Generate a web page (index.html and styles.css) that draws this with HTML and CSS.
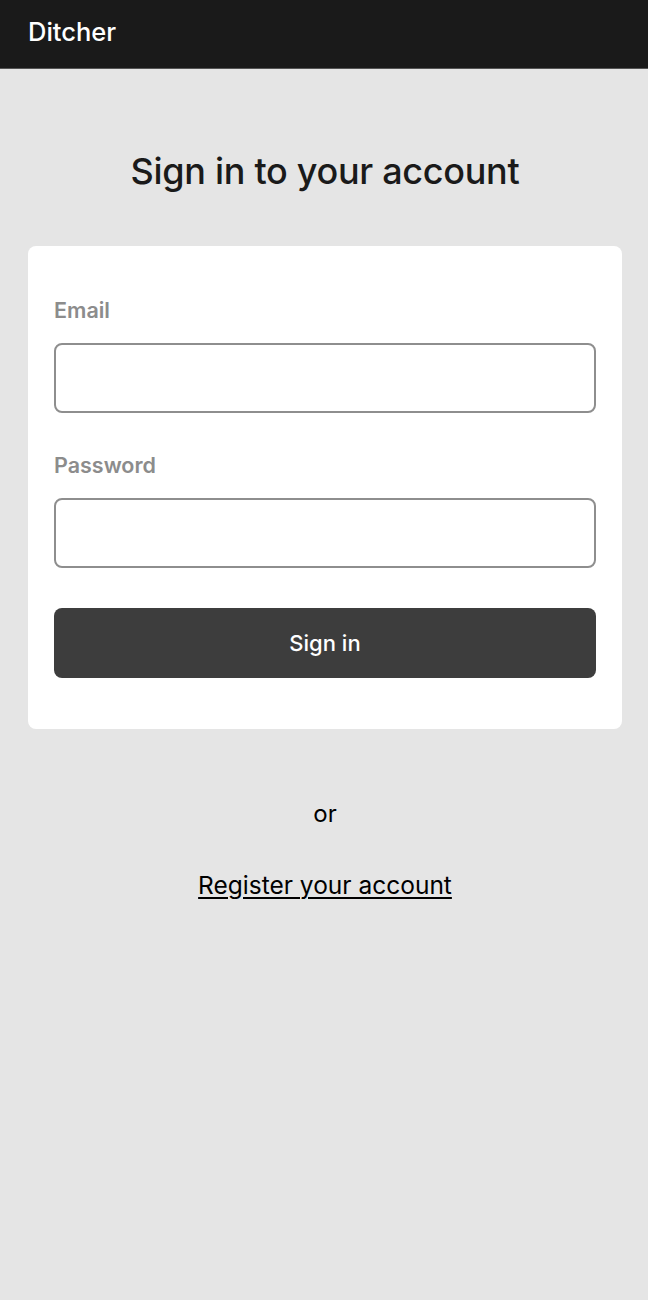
FILE: index.html
```html
<!DOCTYPE html>
<html lang="en">
<head>
<meta charset="utf-8">
<title>Ditcher - Sign in</title>
<link rel="stylesheet" href="styles.css">
</head>
<body>
<header class="topbar"><span class="brand">Ditcher</span></header>
<main class="main">
  <h1 class="title">Sign in to your account</h1>
  <form class="card">
    <label class="label" for="email">Email</label>
    <input class="input" id="email" type="email">
    <label class="label label-2" for="password">Password</label>
    <input class="input" id="password" type="password">
    <button class="btn" type="button">Sign in</button>
  </form>
  <p class="or">or</p>
  <a class="register" href="#">Register your account</a>
</main>
</body>
</html>
```
FILE: styles.css
```css
* { box-sizing: border-box; }
html, body { margin: 0; padding: 0; }
body {
  background: #e5e5e5;
  font-family: Inter, "Noto Sans", sans-serif;
  color: #1a1a1a;
  min-height: 1300px;
}
.topbar {
  height: 69px;
  background: #1a1a1a;
  border-bottom: 1px solid #555;
  display: flex;
  align-items: center;
  padding: 0 28px 6px;
}
.brand {
  color: #fff;
  font-size: 25.5px;
  font-weight: 500;
}
.main {
  padding: 0 26px 0 28px;
  display: flex;
  flex-direction: column;
  align-items: center;
}
.title {
  margin: 80px 0 0;
  font-size: 36px;
  line-height: 44px;
  font-weight: 500;
  letter-spacing: -0.3px;
}
.card {
  margin-top: 53px;
  width: 100%;
  background: #fff;
  border-radius: 8px;
  padding: 52px 26px 51px;
  display: flex;
  flex-direction: column;
}
.label {
  font-size: 21.5px;
  line-height: 24px;
  font-weight: 600;
  color: #8c8c8c;
  margin-bottom: 21px;
}
.label-2 { margin-top: 40px; }
.input {
  height: 70px;
  border: 2px solid #8e8e8e;
  border-radius: 8px;
  background: #fff;
  font: inherit;
  padding: 0 14px;
}
.btn {
  margin-top: 40px;
  height: 70px;
  border: 0;
  border-radius: 8px;
  background: #3d3d3d;
  color: #fff;
  font-family: inherit;
  font-size: 22px;
  font-weight: 500;
}
.or {
  margin: 70px 0 0;
  font-size: 24px;
  line-height: 30px;
  color: #000;
}
.register {
  margin-top: 41px;
  font-size: 24.5px;
  line-height: 30px;
  color: #000;
  text-decoration: underline;
  text-underline-offset: 3px;
  text-decoration-thickness: 1.5px;
}
```
